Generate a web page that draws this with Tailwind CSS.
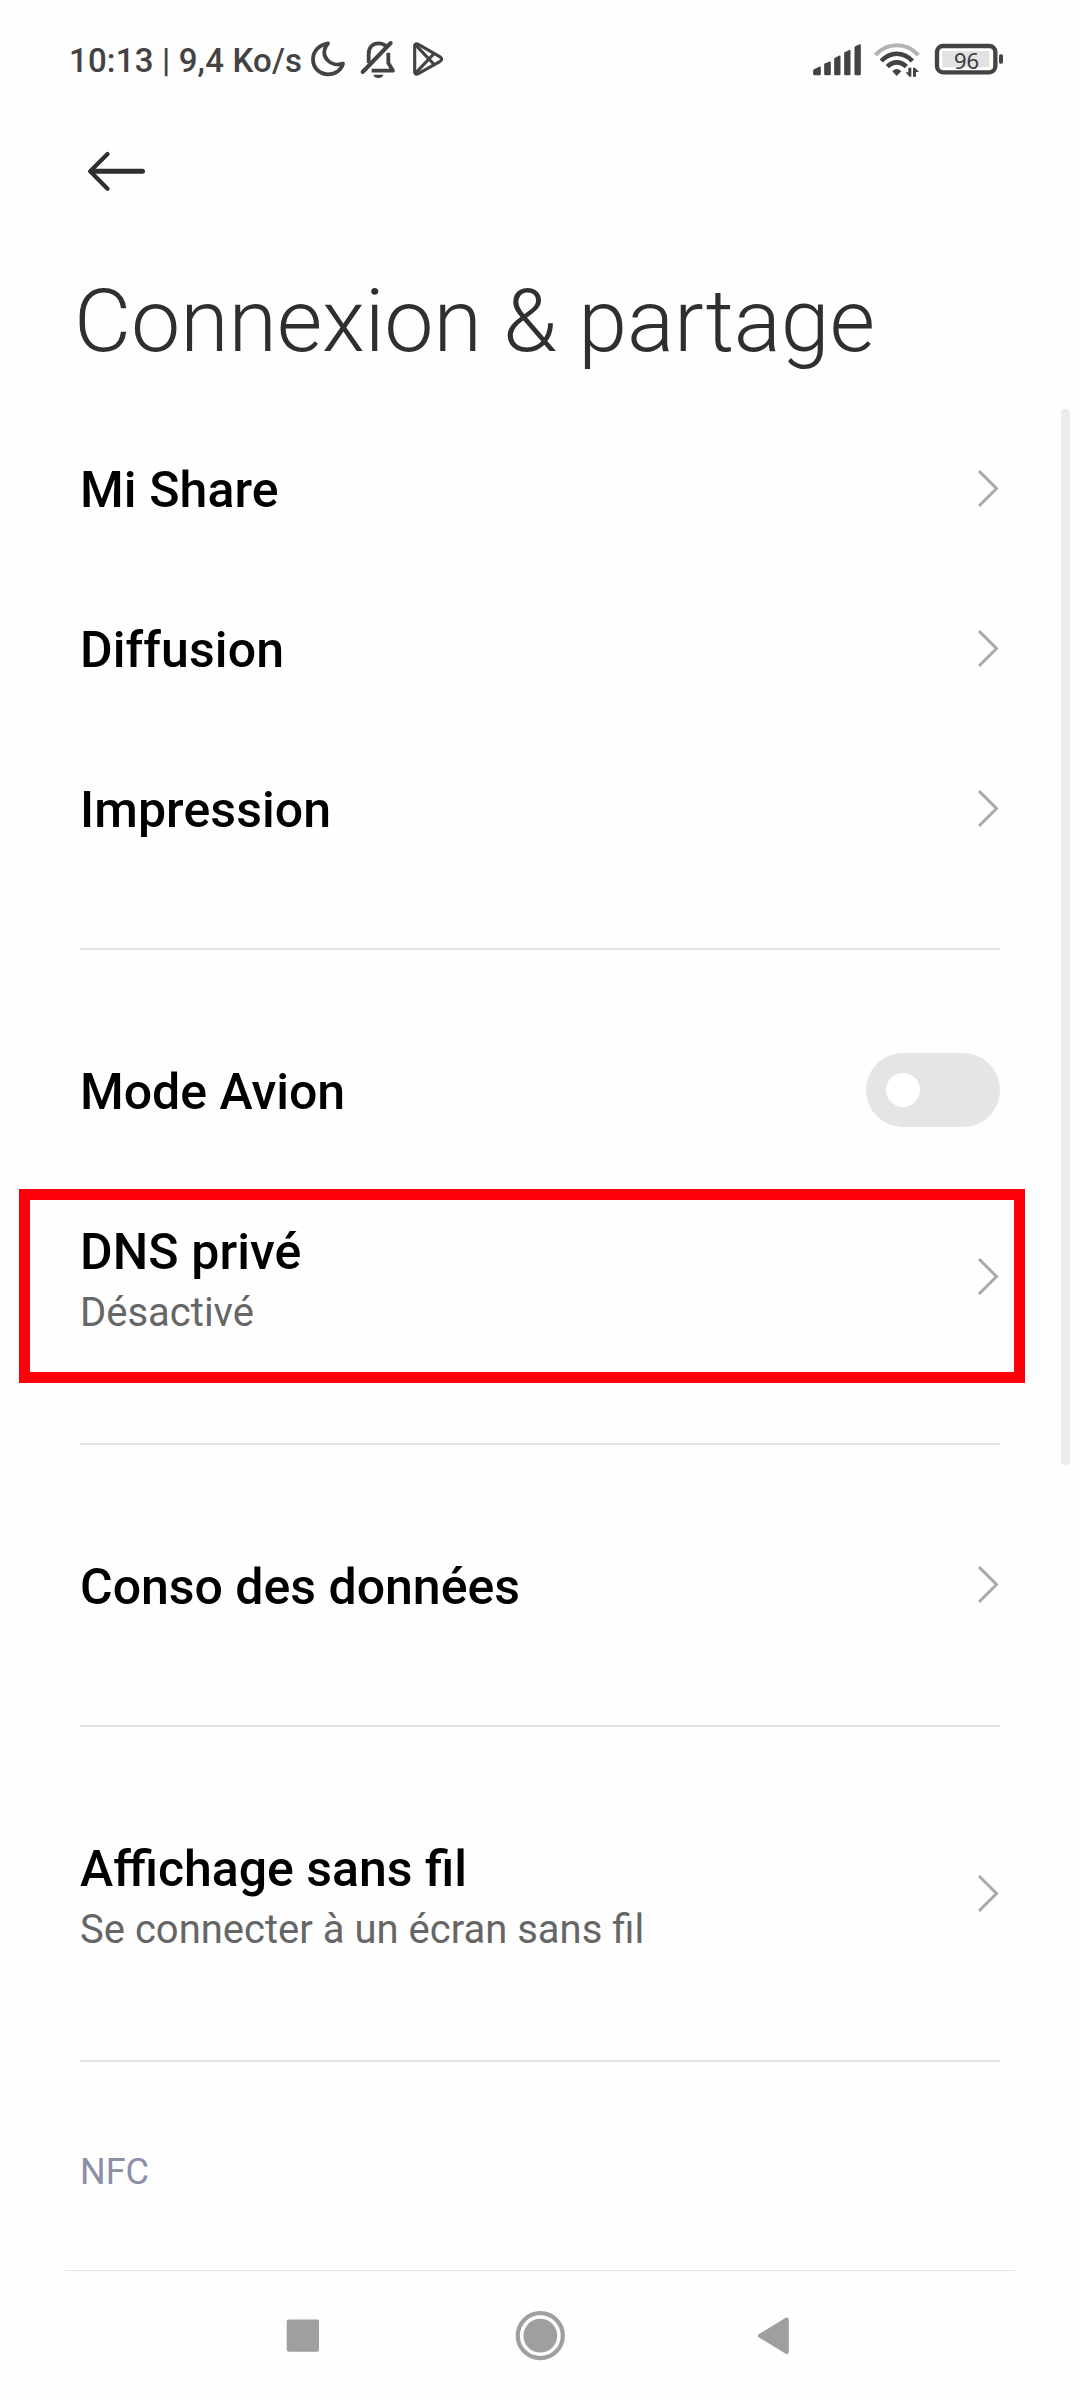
<!DOCTYPE html>
<html lang="fr">
<head>
<meta charset="utf-8">
<title>Connexion &amp; partage</title>
<script src="https://cdn.jsdelivr.net/npm/@tailwindcss/browser@4"></script>
</head>
<body class="bg-[#fefefe]">
<div class="relative flex h-[2400px] w-[1080px] flex-col overflow-hidden bg-[#fefefe] font-[Roboto,sans-serif] text-black">

  <!-- Status bar -->
  <header class="flex h-[120px] shrink-0 items-center justify-between pl-[69px] pr-[74px] text-[#434343]">
    <div class="flex items-center gap-[5px]">
      <span class="w-[231px] whitespace-nowrap pt-[2px] text-[33px] font-medium leading-[60px] tracking-[0.17px]">10:13 | 9,4 Ko/s</span>
      <svg class="h-[60px] w-[45px]" viewBox="45 0 135 180" fill="none" stroke="currentColor" stroke-width="11.500" stroke-linejoin="round"><path d="M114 40C86 45 69 64 69 88C69 113 88 133 114 133C136 133 153 121 159 101C143 106 124 103 112 90C99 76 100 57 114 40Z"/></svg>
      <svg class="h-[60px] w-[45px]" viewBox="195 0 135 180" fill="none" stroke="currentColor" stroke-width="11.500"><path d="M236 99V72C236 51 249 40 266 40C275 40 283 43 289 49"/><path d="M295 68V99L309 122H245" stroke-linejoin="round"/><path d="M218 126L302 39" stroke-width="12" stroke-linecap="round"/><path d="M250 134H280C279 140 273 144 265 144S251 140 250 134Z" fill="currentColor" stroke="none"/></svg>
      <svg class="h-[60px] w-[45px]" viewBox="345 0 135 180" fill="none" stroke="currentColor" stroke-width="9.500" stroke-linejoin="round" stroke-linecap="round"><path d="M374 48C374 41 379 40 385 43L449 80C457 85 457 90 449 95L385 131C379 134 374 133 374 126Z"/><path d="M378 46L431 102M378 128L431 72"/></svg>
    </div>
    <div class="flex items-center">
      <svg class="mr-[5px] h-[60px] w-[55px]" viewBox="30 0 165 180" fill="currentColor" stroke="currentColor" stroke-width="5" stroke-linejoin="round"><path d="M42 121L60 112V133H42ZM75 103L90 97V133H75ZM105 86L119 79V133H105ZM135 69L149 62V133H135ZM166 52L180 45V133H166Z"/></svg>
      <svg class="mr-[10px] h-[60px] w-[52px]" viewBox="210 0 156 180" fill="none" stroke="currentColor" stroke-width="14"><path d="M226 75C263 36 318 36 355 75" stroke="#b3b3b3" stroke-width="12"/><path d="M244 93C271 64 310 64 337 93"/><path d="M262 110C279 93 302 93 319 110"/><path d="M277 124Q290 110 304 124L290 138Z" fill="currentColor" stroke="none"/><path d="M325 113H334V140H328L317 127H325ZM339 140V113H345L357 126H348V140Z" fill="currentColor" stroke="none"/></svg>
      <div class="relative h-[60px] w-[74px]">
        <svg class="h-[60px] w-[74px]" viewBox="396 0 222 180"><rect x="411" y="48" width="175" height="79" rx="18" fill="none" stroke="currentColor" stroke-width="13"/><rect x="427" y="63" width="141" height="49" rx="5" fill="#e2e2e2"/><rect x="597" y="73" width="12" height="28" rx="5" fill="currentColor"/></svg>
        <span class="absolute left-[3px] top-0 w-[63px] text-center font-['Noto_Sans',sans-serif] text-[22px] leading-[60px] text-[#3a3a3a]">96</span>
      </div>
    </div>
  </header>

  <!-- Title -->
  <div class="flex h-[102px] shrink-0 items-center pl-[80px]">
    <svg class="h-[60px] w-[70px]" viewBox="0 0 70 60" fill="none" stroke="#2f2f2f" stroke-linecap="round" stroke-linejoin="round"><path d="M11 30.3H62.500" stroke-width="5"/><path d="M27.500 13L10.200 30.300L27.500 47.700" stroke-width="4.200"/></svg>
  </div>
  <h1 class="flex h-[187px] shrink-0 items-center whitespace-nowrap pl-[74px] pt-[10px] text-[88px] font-light leading-[110px] tracking-[-0.15px] text-[#2f2f2f]">Connexion &amp; partage</h1>

  <!-- Settings list -->
  <main class="flex flex-col px-20">
    <div class="flex h-40 items-center justify-between">
      <span class="pt-[2px] text-[50px] font-medium leading-[60px] tracking-[0.1px]">Mi Share</span>
      <svg class="h-[40px] w-[24px]" viewBox="0 0 24 40" fill="none" stroke="#a9a9a9" stroke-width="3"><path d="M3 2L20.500 19.500L3 37"/></svg>
    </div>
    <div class="flex h-40 items-center justify-between">
      <span class="pt-[2px] text-[50px] font-medium leading-[60px] tracking-[0.1px]">Diffusion</span>
      <svg class="h-[40px] w-[24px]" viewBox="0 0 24 40" fill="none" stroke="#a9a9a9" stroke-width="3"><path d="M3 2L20.500 19.500L3 37"/></svg>
    </div>
    <div class="flex h-40 items-center justify-between">
      <span class="pt-[2px] text-[50px] font-medium leading-[60px] tracking-[0.1px]">Impression</span>
      <svg class="h-[40px] w-[24px]" viewBox="0 0 24 40" fill="none" stroke="#a9a9a9" stroke-width="3"><path d="M3 2L20.500 19.500L3 37"/></svg>
    </div>
    <div class="mb-[60px] mt-[59px] h-[2px] bg-[#e4e4e4]"></div>

    <div class="flex h-40 items-center justify-between">
      <span class="pt-[4px] text-[50px] font-medium leading-[60px]">Mode Avion</span>
      <div class="flex h-[74px] w-[134px] items-center rounded-full bg-[#e5e5e5] pl-[20px]"><div class="size-[34px] rounded-full bg-white"></div></div>
    </div>
    <div class="relative flex h-[213px] items-center justify-between">
      <div class="flex flex-col pt-[11px] leading-[60px]">
        <span class="text-[50px] font-medium tracking-[0.1px]">DNS privé</span>
        <span class="-mb-px pt-px text-[40px] text-[#666666]">Désactivé</span>
      </div>
      <svg class="h-[40px] w-[24px]" viewBox="0 0 24 40" fill="none" stroke="#a9a9a9" stroke-width="3"><path d="M3 2L20.500 19.500L3 37"/></svg>
      <div class="absolute -left-[61px] top-[19px] h-[194px] w-[1006px] border-[11px] border-[#ff0008]"></div>
    </div>
    <div class="my-[60px] h-[2px] bg-[#e4e4e4]"></div>

    <div class="flex h-40 items-center justify-between">
      <span class="pt-[4px] text-[50px] font-medium leading-[60px]">Conso des données</span>
      <svg class="h-[40px] w-[24px]" viewBox="0 0 24 40" fill="none" stroke="#a9a9a9" stroke-width="3"><path d="M3 2L20.500 19.500L3 37"/></svg>
    </div>
    <div class="my-[60px] h-[2px] bg-[#e4e4e4]"></div>

    <div class="flex h-[213px] items-center justify-between">
      <div class="flex flex-col pt-[11px] leading-[60px]">
        <span class="text-[50px] font-medium">Affichage sans fil</span>
        <span class="-mb-px pt-px text-[40px] text-[#666666]">Se connecter à un écran sans fil</span>
      </div>
      <svg class="h-[40px] w-[24px]" viewBox="0 0 24 40" fill="none" stroke="#a9a9a9" stroke-width="3"><path d="M3 2L20.500 19.500L3 37"/></svg>
    </div>
    <div class="mt-[60px] h-[2px] bg-[#e4e4e4]"></div>

    <h2 class="h-[208px] pt-[80px] text-[36px] leading-[60px] text-[#8b8fa8]">NFC</h2>
  </main>

  <!-- Navigation bar -->
  <div class="mx-[65px] h-px shrink-0 bg-[#e2e2e2]"></div>
  <nav class="flex h-[129px] shrink-0 items-center pl-[286px]">
    <svg class="h-[50px] w-[34px]" viewBox="0 0 34 50"><rect x=".7" y="8.500" width="32.300" height="32.300" rx="2" fill="#9f9f9f"/></svg>
    <svg class="ml-[195px] size-[50px]" viewBox="0 0 50 50"><circle cx="25.300" cy="24.700" r="22.500" fill="none" stroke="#9f9f9f" stroke-width="4.200"/><circle cx="25.300" cy="24.700" r="16.900" fill="#9f9f9f"/></svg>
    <svg class="ml-[192px] h-[50px] w-[33px]" viewBox="0 0 33 50"><path d="M29.800 8.500V41L3 24.800Z" fill="#9f9f9f" stroke="#9f9f9f" stroke-width="4" stroke-linejoin="round"/></svg>
  </nav>

  <!-- Scroll indicator -->
  <div class="absolute left-[1061px] top-[409px] h-[1056px] w-[9px] rounded-full bg-[#ececec]"></div>
</div>
</body>
</html>
